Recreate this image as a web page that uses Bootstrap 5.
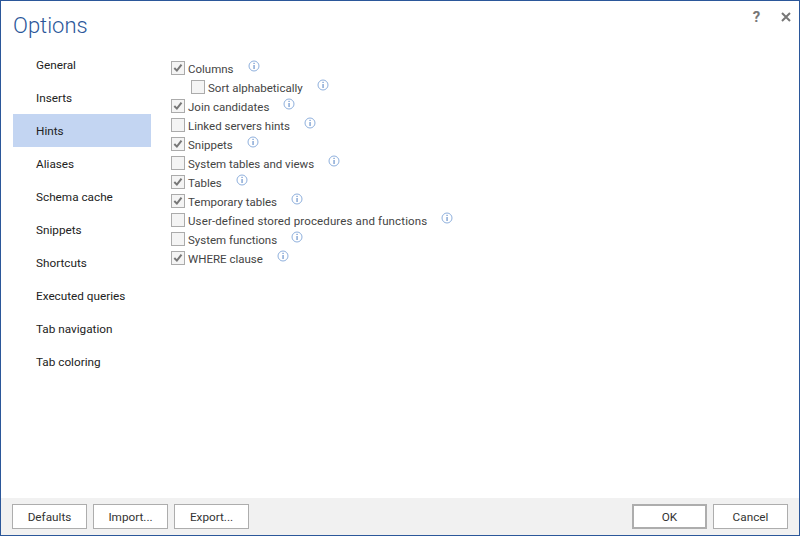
<!DOCTYPE html>
<html lang="en">
<head>
<meta charset="utf-8">
<title>Options</title>
<link href="https://cdn.jsdelivr.net/npm/bootstrap@5.3.0/dist/css/bootstrap.min.css" rel="stylesheet">
<style>
html, body { height: 100%; }
body { margin: 0; background: #fff; font-family: Roboto, "Noto Sans", sans-serif; font-size: 11.75px; color: #444; overflow: hidden; }
.dlg { width: 800px; height: 536px; border: 1px solid #2b579a; }
.dlg-head { height: 47px; padding: 7px 0 0 12px; }
.dlg-title { font-family: Roboto, "Noto Sans", sans-serif; font-weight: 300; font-size: 22px; line-height: 36px; color: #2b579a; margin: 0; }
.dlg-ctl { color: #777; font-weight: 700; font-size: 15px; line-height: 18px; width: 29px; text-align: center; }
.dlg-ctl svg { display: block; margin: 4px auto 0; }
.dlg-tools { margin-right: -1px; }
.dlg-body { min-height: 0; }
.side-list { width: 138px; margin-left: 12px; }
.side-item { display: block; height: 33px; line-height: 35px; padding: 0 0 0 23px; color: #222; width: 100%; }
.side-item.is-on { background: #c3d5f2; }
.opts { margin-left: 20px; padding-top: 10px; }
.opt { height: 19px; color: #444; font-size: 11.5px; }
.opt-long { letter-spacing: .13px; }
.opt .form-check-input { width: 14px; height: 14px; margin: 0 3px 0 0; flex: none; border: 1px solid #ababab; border-radius: 0; background-color: #f4f4f4; box-shadow: none; }
.opt .form-check-input:checked { background-color: #f4f4f4; border-color: #ababab; background-size: 12px 12px; background-image: url("data:image/svg+xml,%3csvg xmlns='http://www.w3.org/2000/svg' viewBox='0 0 12 12'%3e%3cpath fill='none' stroke='%23777' stroke-width='2' d='M2.3 6l2.6 2.6 4.6-6'/%3e%3c/svg%3e"); }
.opt .form-check-label { white-space: nowrap; line-height: 19px; padding-top: 3px; }
.opt-sub { padding-left: 20px; }
.tip { flex: none; margin-left: 14px; margin-top: -3px; display: block; }
.dlg-foot { height: 37px; background: #f1f1f1; padding: 6px 11px 0 11px; }
.act-group { gap: 6px; }
.act { width: 75px; height: 25px; padding: 0; border-radius: 0; border: 1px solid #adadad; background: #fff; color: #333; font-size: 11.75px; line-height: 22px; }
.act.is-def { border-width: 2px; }
</style>
</head>
<body>
<svg width="0" height="0" class="d-block position-absolute">
  <symbol id="ic" viewBox="0 0 12 12">
    <circle cx="6" cy="6" r="5" fill="#fff" stroke="#8fb0dd" stroke-width="1"/>
    <rect x="5.5" y="2.8" width="1.1" height="1.2" fill="#5f8ac7"/>
    <rect x="5.5" y="5" width="1.1" height="4" fill="#5f8ac7"/>
  </symbol>
</svg>
<div class="dlg d-flex flex-column">
  <div class="dlg-head d-flex justify-content-between align-items-start">
    <h1 class="dlg-title">Options</h1>
    <div class="dlg-tools d-flex">
      <div class="dlg-ctl">?</div>
      <div class="dlg-ctl"><svg width="10" height="10" viewBox="0 0 10 10"><path d="M1 1l8 8M9 1l-8 8" stroke="#777" stroke-width="2" fill="none"/></svg></div>
    </div>
  </div>
  <div class="dlg-body d-flex flex-grow-1">
    <nav class="side-list flex-shrink-0">
      <a class="side-item text-decoration-none">General</a>
      <a class="side-item text-decoration-none">Inserts</a>
      <a class="side-item text-decoration-none is-on">Hints</a>
      <a class="side-item text-decoration-none">Aliases</a>
      <a class="side-item text-decoration-none">Schema cache</a>
      <a class="side-item text-decoration-none">Snippets</a>
      <a class="side-item text-decoration-none">Shortcuts</a>
      <a class="side-item text-decoration-none">Executed queries</a>
      <a class="side-item text-decoration-none">Tab navigation</a>
      <a class="side-item text-decoration-none">Tab coloring</a>
    </nav>
    <div class="opts">
      <div class="opt d-flex align-items-center"><input class="form-check-input" type="checkbox" id="o1" checked><label class="form-check-label" for="o1">Columns</label><svg class="tip" width="12" height="12"><use href="#ic"/></svg></div>
      <div class="opt opt-sub d-flex align-items-center"><input class="form-check-input" type="checkbox" id="o2"><label class="form-check-label" for="o2">Sort alphabetically</label><svg class="tip" width="12" height="12"><use href="#ic"/></svg></div>
      <div class="opt d-flex align-items-center"><input class="form-check-input" type="checkbox" id="o3" checked><label class="form-check-label" for="o3">Join candidates</label><svg class="tip" width="12" height="12"><use href="#ic"/></svg></div>
      <div class="opt d-flex align-items-center"><input class="form-check-input" type="checkbox" id="o4"><label class="form-check-label" for="o4">Linked servers hints</label><svg class="tip" width="12" height="12"><use href="#ic"/></svg></div>
      <div class="opt d-flex align-items-center"><input class="form-check-input" type="checkbox" id="o5" checked><label class="form-check-label" for="o5">Snippets</label><svg class="tip" width="12" height="12"><use href="#ic"/></svg></div>
      <div class="opt d-flex align-items-center"><input class="form-check-input" type="checkbox" id="o6"><label class="form-check-label" for="o6">System tables and views</label><svg class="tip" width="12" height="12"><use href="#ic"/></svg></div>
      <div class="opt d-flex align-items-center"><input class="form-check-input" type="checkbox" id="o7" checked><label class="form-check-label" for="o7">Tables</label><svg class="tip" width="12" height="12"><use href="#ic"/></svg></div>
      <div class="opt d-flex align-items-center"><input class="form-check-input" type="checkbox" id="o8" checked><label class="form-check-label" for="o8">Temporary tables</label><svg class="tip" width="12" height="12"><use href="#ic"/></svg></div>
      <div class="opt opt-long d-flex align-items-center"><input class="form-check-input" type="checkbox" id="o9"><label class="form-check-label" for="o9">User-defined stored procedures and functions</label><svg class="tip" width="12" height="12"><use href="#ic"/></svg></div>
      <div class="opt d-flex align-items-center"><input class="form-check-input" type="checkbox" id="o10"><label class="form-check-label" for="o10">System functions</label><svg class="tip" width="12" height="12"><use href="#ic"/></svg></div>
      <div class="opt d-flex align-items-center"><input class="form-check-input" type="checkbox" id="o11" checked><label class="form-check-label" for="o11">WHERE clause</label><svg class="tip" width="12" height="12"><use href="#ic"/></svg></div>
    </div>
  </div>
  <div class="dlg-foot d-flex justify-content-between">
    <div class="d-flex act-group">
      <button class="btn act" type="button">Defaults</button>
      <button class="btn act" type="button">Import...</button>
      <button class="btn act" type="button">Export...</button>
    </div>
    <div class="d-flex act-group">
      <button class="btn act is-def" type="button">OK</button>
      <button class="btn act" type="button">Cancel</button>
    </div>
  </div>
</div>
</body>
</html>
